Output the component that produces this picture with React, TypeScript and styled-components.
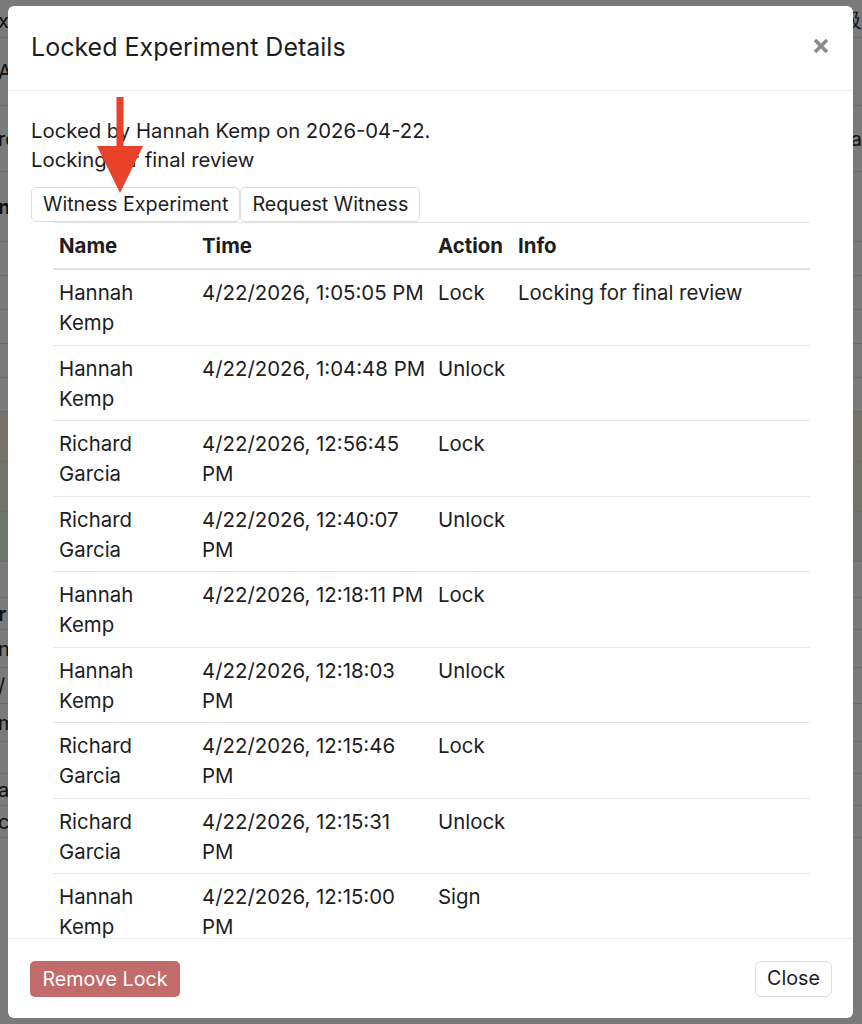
import React from "react";
import styled, { createGlobalStyle } from "styled-components";

const Global = createGlobalStyle`
  html, body { margin: 0; padding: 0; }
  body {
    font-family: Inter, "Noto Sans", "Liberation Sans", sans-serif;
    color: #1d1d1f;
    background: #f4f4f4;
    overflow: hidden;
  }
  * { box-sizing: border-box; }
`;

const Page = styled.div`
  width: 862px;
  height: 1024px;
  position: relative;
  overflow: hidden;
  background: #f4f4f4;
`;

const BgRows = styled.div`
  display: flex;
  flex-direction: column;
  padding-top: 4px;
`;

const BgRow = styled.div<{ $h: number; $tint?: string; $bold?: boolean }>`
  height: ${(p) => p.$h}px;
  display: flex;
  align-items: center;
  justify-content: space-between;
  border-bottom: 1px solid #d8d8d8;
  background: ${(p) => p.$tint || "transparent"};
  font-size: 20px;
  font-weight: ${(p) => (p.$bold ? 700 : 400)};
  color: #222;
  white-space: nowrap;
  overflow: hidden;
`;

const BgText = styled.span`
  margin-left: -2px;
`;

const Backdrop = styled.div`
  position: absolute;
  inset: 0;
  background: rgba(0, 0, 0, 0.5);
`;

const Modal = styled.div`
  position: absolute;
  left: 8px;
  top: 6px;
  width: 845px;
  height: 1012px;
  background: #fff;
  border-radius: 6px;
  display: flex;
  flex-direction: column;
  overflow: hidden;
`;

const Header = styled.div`
  height: 85px;
  flex: none;
  display: flex;
  align-items: center;
  justify-content: space-between;
  padding: 0 24px 0 23px;
  border-bottom: 1px solid #ececec;
`;

const Title = styled.h1`
  margin: 0;
  font-size: 25px;
  font-weight: 400;
  color: #1d1d1f;
  padding-bottom: 2px;
`;

const CloseX = styled.button`
  border: 0;
  background: none;
  padding: 0;
  width: 16px;
  height: 16px;
  display: flex;
  margin-bottom: 4px;
  cursor: pointer;
`;

const Body = styled.div`
  flex: 1;
  overflow-y: auto;
  scrollbar-width: none;
  padding: 25px 23px 0 23px;
  &::-webkit-scrollbar { display: none; }
`;

const Info = styled.p`
  margin: 0 0 13px 0;
  font-size: 20.3px;
  line-height: 29px;
  color: #1d1d1f;
`;

const ButtonRow = styled.div`
  display: flex;
`;

const OutlineButton = styled.button`
  font-family: inherit;
  font-size: 19.7px;
  color: #1d1d1f;
  background: #fff;
  border: 1px solid #dcdcdc;
  border-radius: 5px;
  height: 35px;
  padding: 0 11px;
  line-height: 1;
  cursor: pointer;
`;

const Table = styled.table`
  width: 757px;
  margin: 0 19px 0 22px;
  border-collapse: collapse;
  table-layout: fixed;
  font-size: 20.4px;
  line-height: 30px;
  color: #1d1d1f;
  border-top: 1px solid #e4e4e4;
`;

const Th = styled.th`
  text-align: left;
  font-weight: 700;
  padding: 8px 6px 7px 6px;
  border-bottom: 2.5px solid #e2e3e6;
  vertical-align: top;
`;

const Td = styled.td<{ $nowrap?: boolean; $padRight?: number }>`
  padding: 8px ${(p) => p.$padRight ?? 6}px 6.5px 6px;
  border-bottom: 1px solid #e6e6e6;
  vertical-align: top;
  white-space: ${(p) => (p.$nowrap ? "nowrap" : "normal")};
`;

const Footer = styled.div`
  height: 80px;
  flex: none;
  border-top: 1px solid #ececec;
  display: flex;
  align-items: center;
  justify-content: space-between;
  padding: 0 21px 0 22px;
`;

const DangerButton = styled.button`
  font-family: inherit;
  font-size: 19.7px;
  color: #fff;
  background: #c16b6a;
  border: 0;
  border-radius: 5px;
  height: 36px;
  width: 150px;
  padding: 0;
  cursor: pointer;
`;

const FooterButton = styled(OutlineButton)`
  height: 36px;
  width: 77px;
  padding: 0;
  border-radius: 6px;
`;

const Arrow = styled.svg`
  position: absolute;
  left: 0;
  top: 0;
  pointer-events: none;
`;

type Row = { name: string; time: string; action: string; info: string; oneLine?: boolean };

const rows: Row[] = [
  { name: "Hannah Kemp", time: "4/22/2026, 1:05:05 PM", action: "Lock", info: "Locking for final review", oneLine: true },
  { name: "Hannah Kemp", time: "4/22/2026, 1:04:48 PM", action: "Unlock", info: "", oneLine: true },
  { name: "Richard Garcia", time: "4/22/2026, 12:56:45 PM", action: "Lock", info: "" },
  { name: "Richard Garcia", time: "4/22/2026, 12:40:07 PM", action: "Unlock", info: "" },
  { name: "Hannah Kemp", time: "4/22/2026, 12:18:11 PM", action: "Lock", info: "", oneLine: true },
  { name: "Hannah Kemp", time: "4/22/2026, 12:18:03 PM", action: "Unlock", info: "" },
  { name: "Richard Garcia", time: "4/22/2026, 12:15:46 PM", action: "Lock", info: "" },
  { name: "Richard Garcia", time: "4/22/2026, 12:15:31 PM", action: "Unlock", info: "" },
  { name: "Hannah Kemp", time: "4/22/2026, 12:15:00 PM", action: "Sign", info: "" },
];

const bg: { h: number; left: string; right?: string; tint?: string; bold?: boolean }[] = [
  { h: 34, left: "xp", right: "級" },
  { h: 68, left: "A", right: "" },
  { h: 66, left: "re", right: "a" },
  { h: 70, left: "nt", bold: true },
  { h: 34, left: "" },
  { h: 34, left: "" },
  { h: 34, left: "" },
  { h: 34, left: "" },
  { h: 34, left: "" },
  { h: 50, left: "", tint: "#e9e4d2" },
  { h: 50, left: "", tint: "#e4e8d6" },
  { h: 50, left: "", tint: "#dfe8dd" },
  { h: 36, left: "" },
  { h: 32, left: "r", bold: true },
  { h: 38, left: "n" },
  { h: 36, left: "/" },
  { h: 38, left: "m" },
  { h: 32, left: "" },
  { h: 32, left: "a" },
  { h: 32, left: "c" },
  { h: 280, left: "" },
];

export default function App() {
  return (
    <Page>
      <Global />
      <BgRows>
        {bg.map((r, i) => (
          <BgRow key={i} $h={r.h} $tint={r.tint} $bold={r.bold}>
            <BgText>{r.left}</BgText>
            <span>{r.right}</span>
          </BgRow>
        ))}
      </BgRows>
      <Backdrop />
      <Modal>
        <Header>
          <Title>Locked Experiment Details</Title>
          <CloseX aria-label="Close">
            <svg width="16" height="16" viewBox="0 0 16 16">
              <path d="M2 2 L14 14 M14 2 L2 14" stroke="#8a8a8a" strokeWidth="3.6" strokeLinecap="butt" />
            </svg>
          </CloseX>
        </Header>
        <Body>
          <Info>
            Locked by Hannah Kemp on 2026-04-22.
            <br />
            Locking for final review
          </Info>
          <ButtonRow>
            <OutlineButton>Witness Experiment</OutlineButton>
            <OutlineButton>Request Witness</OutlineButton>
          </ButtonRow>
          <Table>
            <colgroup>
              <col style={{ width: 143 }} />
              <col style={{ width: 236 }} />
              <col style={{ width: 80 }} />
              <col />
            </colgroup>
            <thead>
              <tr>
                <Th>Name</Th>
                <Th>Time</Th>
                <Th>Action</Th>
                <Th>Info</Th>
              </tr>
            </thead>
            <tbody>
              {rows.map((r, i) => (
                <tr key={i}>
                  <Td>{r.name}</Td>
                  <Td $nowrap={r.oneLine} $padRight={9}>{r.time}</Td>
                  <Td>{r.action}</Td>
                  <Td>{r.info}</Td>
                </tr>
              ))}
            </tbody>
          </Table>
        </Body>
        <Footer>
          <DangerButton>Remove Lock</DangerButton>
          <FooterButton>Close</FooterButton>
        </Footer>
      </Modal>
      <Arrow width="862" height="1024" viewBox="0 0 862 1024">
        <rect x="116.5" y="97" width="7" height="52" fill="#e8432a" />
        <polygon points="97,146 143,146 120,193" fill="#e8432a" />
      </Arrow>
    </Page>
  );
}
